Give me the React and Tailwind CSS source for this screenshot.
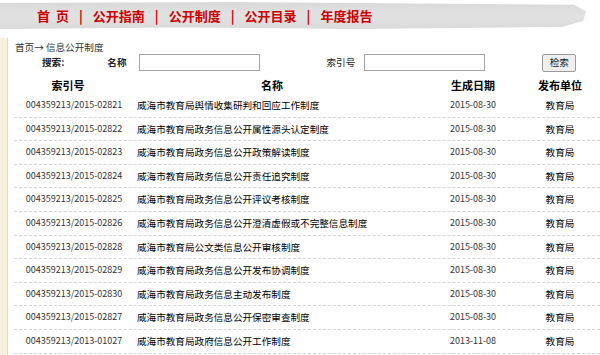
const menu = ['首 页', '公开指南', '公开制度', '公开目录', '年度报告']

const rows = [
  ['004359213/2015-02821', '威海市教育局舆情收集研判和回应工作制度', '2015-08-30'],
  ['004359213/2015-02822', '威海市教育局政务信息公开属性源头认定制度', '2015-08-30'],
  ['004359213/2015-02823', '威海市教育局政务信息公开政策解读制度', '2015-08-30'],
  ['004359213/2015-02824', '威海市教育局政务信息公开责任追究制度', '2015-08-30'],
  ['004359213/2015-02825', '威海市教育局政务信息公开评议考核制度', '2015-08-30'],
  ['004359213/2015-02826', '威海市教育局政务信息公开澄清虚假或不完整信息制度', '2015-08-30'],
  ['004359213/2015-02828', '威海市教育局公文类信息公开审核制度', '2015-08-30'],
  ['004359213/2015-02829', '威海市教育局政务信息公开发布协调制度', '2015-08-30'],
  ['004359213/2015-02830', '威海市教育局政务信息主动发布制度', '2015-08-30'],
  ['004359213/2015-02827', '威海市教育局政务信息公开保密审查制度', '2015-08-30'],
  ['004359213/2013-01027', '威海市教育局政府信息公开工作制度', '2013-11-08'],
]

function App() {
  return (
    <div className="w-[600px] h-[355px] overflow-hidden bg-white font-['Noto_Sans_CJK_SC',sans-serif] text-[9.6px] text-[#222]">
      {/* Top menu band */}
      <div className="h-[30px] bg-white pt-[2px]">
        <div className="h-[27px] w-[592px] bg-gradient-to-b from-[#d9d9d9] via-[#e2e2e2] to-[#dadada] [clip-path:polygon(0_4%,40%_0,70%_6%,97%_10%,99%_35%,98.5%_70%,95%_92%,60%_100%,30%_94%,0_100%)] flex items-center pl-[37px]">
          {menu.map((m, i) => (
            <div key={m} className="flex items-center">
              {i > 0 ? <span className="mx-[10px] text-[13px] font-bold text-[#cc0000] leading-none">|</span> : null}
              <span className="text-[13px] font-bold text-[#cc0000] leading-none whitespace-pre">{m === '首 页' ? '首  页' : m}</span>
            </div>
          ))}
        </div>
      </div>

      <div className="flex h-[325px]">
        {/* left stripe */}
        <div className="w-[8px] mt-[8px] bg-[#f7f1dc] border-r border-[#e6dcbc]" />

        <div className="flex-1 pl-[6px]">
          {/* breadcrumb */}
          <div className="h-[22px] pt-[11px] pl-[1px] leading-[12px] text-[#333]">首页→ 信息公开制度</div>

          {/* search */}
          <div className="flex items-center h-[21px]">
            <span className="ml-[28px] font-bold">搜索:</span>
            <span className="ml-[43px] font-bold">名称</span>
            <div className="ml-[12px] w-[121px] h-[17px] border border-[#a5a5a5] bg-white" />
            <span className="ml-[67px]">索引号</span>
            <div className="ml-[9px] w-[121px] h-[17px] border border-[#a5a5a5] bg-white" />
            <button type="button" className="ml-[57px] w-[34px] h-[18px] border border-[#9a9a9a] rounded-[2px] bg-[#efefef] leading-none text-[#222]">检索</button>
          </div>

          {/* header */}
          <div className="flex h-[21px] items-center pt-[4px] text-[11px] font-bold text-black">
            <div className="w-[108px] text-center">索引号</div>
            <div className="w-[300px] text-center">名称</div>
            <div className="w-[102px] text-center">生成日期</div>
            <div className="w-[72px] text-center">发布单位</div>
          </div>

          {/* rows */}
          {rows.map(([code, name, date]) => (
            <div key={code} className="flex h-[23.6px] border-b border-dashed border-[#d6d6d6] pt-[5px] leading-[12px]">
              <div className="w-[120px] text-center text-[9px] text-[#333]">{code}</div>
              <div className="w-[288px] pl-[3px] text-black whitespace-nowrap">{name}</div>
              <div className="w-[102px] text-center text-[9px] text-[#333]">{date}</div>
              <div className="w-[72px] text-center text-black">教育局</div>
            </div>
          ))}
        </div>
      </div>
    </div>
  )
}

export default App
